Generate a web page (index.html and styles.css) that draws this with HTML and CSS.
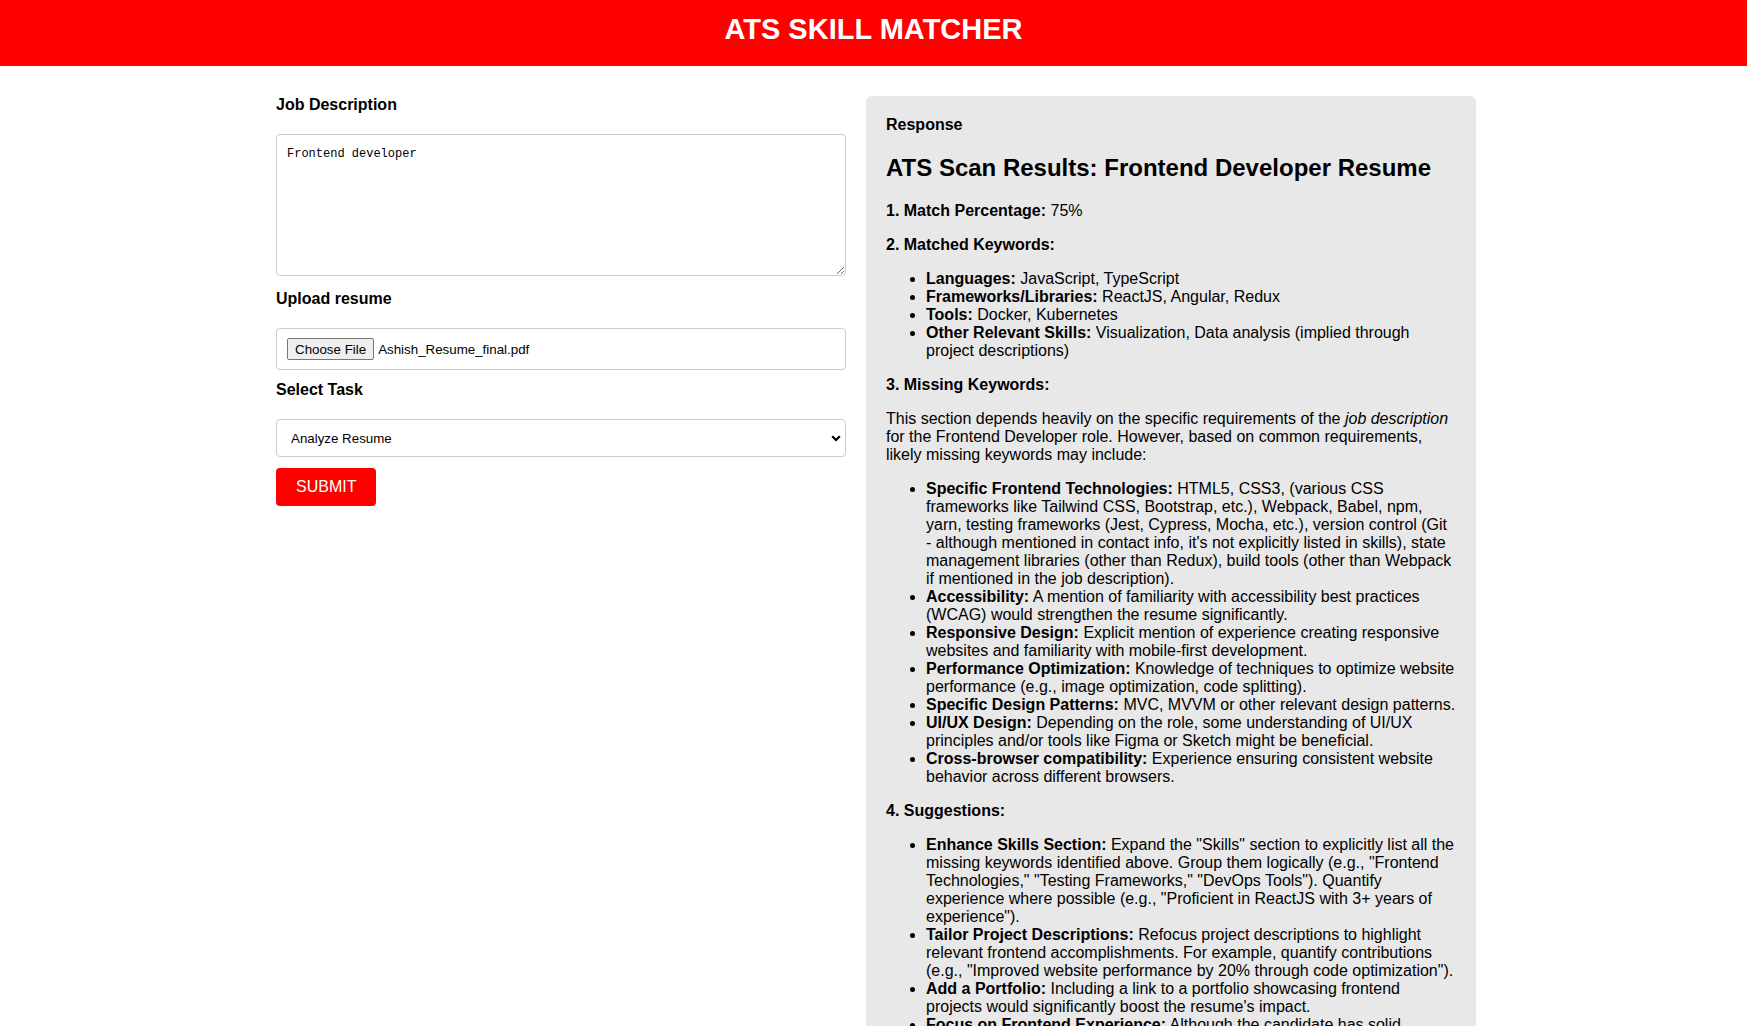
FILE: index.html
```html
<!DOCTYPE html>
<html lang="en">
<head>
<meta charset="utf-8">
<title>ATS Skill Matcher</title>
<link rel="stylesheet" href="styles.css">
</head>
<body>
<header class="topbar">
  <h1 class="title">ATS SKILL MATCHER</h1>
</header>
<main class="layout">
  <form class="form-col">
    <label class="field-label" for="jd">Job Description</label>
    <textarea id="jd" class="jd-input">Frontend developer</textarea>

    <label class="field-label">Upload resume</label>
    <div class="file-box">
      <span class="file-btn">Choose File</span>
      <span class="file-name">Ashish_Resume_final.pdf</span>
    </div>

    <label class="field-label" for="task">Select Task</label>
    <div class="select-wrap">
      <select id="task" class="task-select">
        <option>Analyze Resume</option>
      </select>
      <svg class="chevron" width="10" height="7" viewBox="0 0 10 7" aria-hidden="true">
        <polyline points="1.2,1.2 5,5 8.8,1.2" fill="none" stroke="#000" stroke-width="2.2" stroke-linecap="butt" stroke-linejoin="miter"/>
      </svg>
    </div>

    <button type="button" class="submit-btn">SUBMIT</button>
  </form>

  <section class="response">
    <div class="field-label">Response</div>
    <h2 class="resp-title">ATS Scan Results: Frontend Developer Resume</h2>
    <p><strong>1. Match Percentage:</strong> 75%</p>
    <p><strong>2. Matched Keywords:</strong></p>
    <ul>
      <li><strong>Languages:</strong> JavaScript, TypeScript</li>
      <li><strong>Frameworks/Libraries:</strong> ReactJS, Angular, Redux</li>
      <li><strong>Tools:</strong> Docker, Kubernetes</li>
      <li><strong>Other Relevant Skills:</strong> Visualization, Data analysis (implied through project descriptions)</li>
    </ul>
    <p><strong>3. Missing Keywords:</strong></p>
    <p>This section depends heavily on the specific requirements of the <em>job description</em> for the Frontend Developer role. However, based on common requirements, likely missing keywords may include:</p>
    <ul>
      <li><strong>Specific Frontend Technologies:</strong> HTML5, CSS3, (various CSS frameworks like Tailwind CSS, Bootstrap, etc.), Webpack, Babel, npm, yarn, testing frameworks (Jest, Cypress, Mocha, etc.), version control (Git - although mentioned in contact info, it's not explicitly listed in skills), state management libraries (other than Redux), build tools (other than Webpack if mentioned in the job description).</li>
      <li><strong>Accessibility:</strong> A mention of familiarity with accessibility best practices (WCAG) would strengthen the resume significantly.</li>
      <li><strong>Responsive Design:</strong> Explicit mention of experience creating responsive websites and familiarity with mobile-first development.</li>
      <li><strong>Performance Optimization:</strong> Knowledge of techniques to optimize website performance (e.g., image optimization, code splitting).</li>
      <li><strong>Specific Design Patterns:</strong> MVC, MVVM or other relevant design patterns.</li>
      <li><strong>UI/UX Design:</strong> Depending on the role, some understanding of UI/UX principles and/or tools like Figma or Sketch might be beneficial.</li>
      <li><strong>Cross-browser compatibility:</strong> Experience ensuring consistent website behavior across different browsers.</li>
    </ul>
    <p><strong>4. Suggestions:</strong></p>
    <ul>
      <li><strong>Enhance Skills Section:</strong> Expand the "Skills" section to explicitly list all the missing keywords identified above. Group them logically (e.g., "Frontend Technologies," "Testing Frameworks," "DevOps Tools"). Quantify experience where possible (e.g., "Proficient in ReactJS with 3+ years of experience").</li>
      <li><strong>Tailor Project Descriptions:</strong> Refocus project descriptions to highlight relevant frontend accomplishments. For example, quantify contributions (e.g., "Improved website performance by 20% through code optimization").</li>
      <li><strong>Add a Portfolio:</strong> Including a link to a portfolio showcasing frontend projects would significantly boost the resume's impact.</li>
      <li><strong>Focus on Frontend Experience:</strong> Although the candidate has solid experience with backend and DevOps tools, the resume should emphasize frontend work more prominently for a Frontend Developer role.</li>
      <li><strong>Keywords Optimization:</strong> Use the exact wording found in the job description wherever it truthfully reflects the candidate's experience.</li>
    </ul>
    <p><strong>5. Overall Assessment:</strong></p>
    <p>The resume shows a strong technical foundation, but targeted improvements would increase its match rate for Frontend Developer positions.</p>
  </section>
</main>
</body>
</html>
```

FILE: styles.css
```css
html {
  scrollbar-width: none;
}

body {
  margin: 0;
  font-family: "Liberation Sans", Arial, sans-serif;
  font-size: 16px;
  color: #000;
  background: #fff;
}

.topbar {
  background: #ff0000;
  height: 66px;
  box-sizing: border-box;
  padding-top: 13px;
}

.title {
  margin: 0;
  text-align: center;
  color: #fff;
  font-size: 29px;
  line-height: 32px;
  font-weight: bold;
}

.layout {
  display: flex;
  align-items: flex-start;
  gap: 20px;
  width: 1200px;
  margin: 30px 0 0 calc(50% - 597.5px);
}

.form-col {
  width: 570px;
  display: flex;
  flex-direction: column;
  align-items: flex-start;
}

.field-label {
  display: block;
  font-weight: bold;
  font-size: 16px;
  margin-bottom: 20px;
}

.jd-input {
  display: block;
  box-sizing: border-box;
  width: 570px;
  height: 142px;
  margin: 0 0 14px;
  padding: 12px 10px 9px;
  border: 1px solid #cccccc;
  border-radius: 4px;
  font-family: "Liberation Mono", "DejaVu Sans Mono", monospace;
  font-size: 12px;
  color: #000;
  background: #fff;
}

.file-box {
  box-sizing: border-box;
  width: 570px;
  height: 42px;
  margin-bottom: 11px;
  padding: 9px 10px;
  border: 1px solid #cccccc;
  border-radius: 4px;
  display: flex;
  align-items: center;
  font-size: 13.33px;
}

.file-btn {
  box-sizing: border-box;
  height: 22px;
  padding: 0 7px;
  display: inline-flex;
  align-items: center;
  background: #efefef;
  border: 1px solid #767676;
  border-radius: 2px;
  color: #000;
}

.file-name {
  margin-left: 4px;
}

.select-wrap {
  position: relative;
  width: 570px;
  margin-bottom: 11px;
}

.task-select {
  -webkit-appearance: none;
  appearance: none;
  display: block;
  box-sizing: border-box;
  width: 570px;
  height: 38px;
  padding: 0 14px;
  border: 1px solid #cccccc;
  border-radius: 4px;
  background: #fff;
  font-family: "Liberation Sans", Arial, sans-serif;
  font-size: 13.33px;
  color: #000;
}

.chevron {
  position: absolute;
  right: 5px;
  top: 16px;
  pointer-events: none;
}

.submit-btn {
  box-sizing: border-box;
  height: 38px;
  width: 100px;
  padding: 0 20px;
  border: none;
  border-radius: 4px;
  background: #ff0000;
  color: #fff;
  font-family: "Liberation Sans", Arial, sans-serif;
  font-size: 16px;
}

.response {
  flex: 1;
  background: #e8e8e8;
  border-radius: 6px;
  padding: 20px;
  line-height: normal;
}

.resp-title {
  font-size: 24px;
  margin: 0.83em 0;
}

.response p {
  margin: 16px 0;
}

.response ul {
  margin: 16px 0;
  padding-left: 40px;
}
```
